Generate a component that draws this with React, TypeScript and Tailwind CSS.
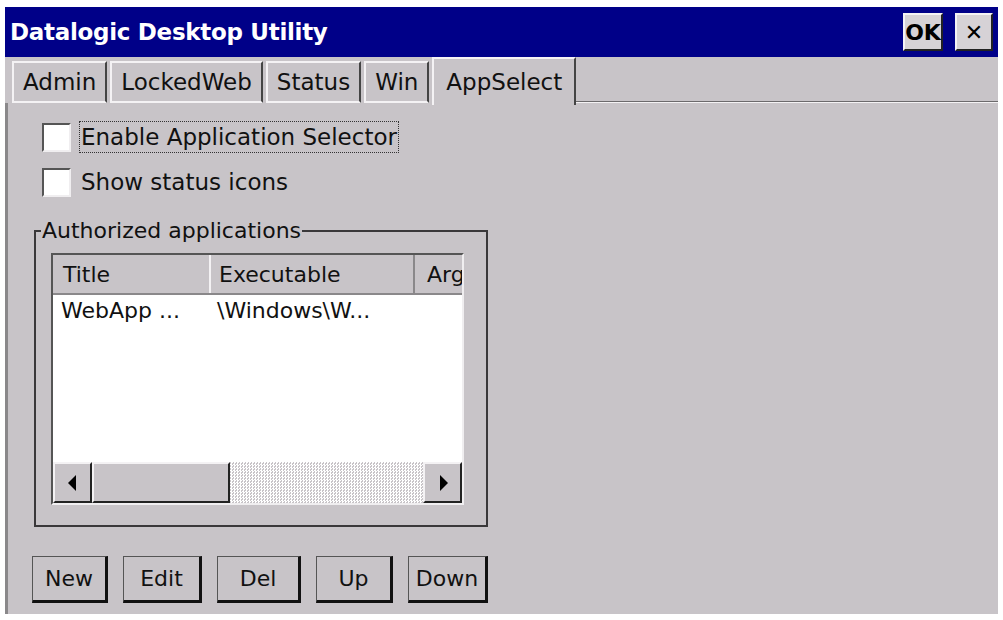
import React from 'react';

// CE-style 3D helpers
const raised = 'border-t-2 border-l-2 border-t-[#f4f2f4] border-l-[#f4f2f4] border-b-2 border-r-2 border-b-[#222] border-r-[#222]';
const sunken = 'border-t-2 border-l-2 border-t-[#555] border-l-[#555] border-b-2 border-r-2 border-b-[#f0eef0] border-r-[#f0eef0]';

const tabs = ['Admin', 'LockedWeb', 'Status', 'Win', 'AppSelect'];
const active = 'AppSelect';

function Checkbox({ label, focused }: { label: string; focused?: boolean }) {
  return (
    <div className="flex items-center h-[30px]">
      <div className={`w-[29px] h-[29px] bg-white ${sunken}`} />
      <span
        className={`ml-[9px] px-[1px] leading-[30px] ${focused ? 'outline outline-1 outline-dotted outline-[#333]' : ''}`}
      >
        {label}
      </span>
    </div>
  );
}

function Arrow({ dir }: { dir: 'left' | 'right' }) {
  return (
    <div className={`w-[39px] h-full bg-[#c8c4c8] ${raised} flex items-center justify-center`}>
      <svg width="10" height="16" viewBox="0 0 10 16">
        {dir === 'left' ? <path d="M8 0 L8 16 L0 8 Z" fill="#000" /> : <path d="M2 0 L2 16 L10 8 Z" fill="#000" />}
      </svg>
    </div>
  );
}

export default function App() {
  return (
    <div
      className="w-[1003px] h-[620px] bg-white pt-[7px] pl-[5px] overflow-hidden text-[#111]"
      style={{ fontFamily: '"DejaVu Sans", Verdana, sans-serif' }}
    >
      <div className="w-[993px] h-[607px] bg-[#c8c4c8] flex flex-col">
        {/* title bar */}
        <div className="h-[50px] bg-[#000088] flex items-center pl-[5px] pr-[5px]">
          <span className="text-white font-bold text-[23px] tracking-[-0.3px]">Datalogic Desktop Utility</span>
          <div className="ml-auto flex items-center gap-[12px]">
            <div className={`w-[40px] h-[38px] bg-[#d6d2d6] flex items-center justify-center font-bold text-[22px] text-black ${raised}`}>
              OK
            </div>
            <div className={`w-[38px] h-[38px] bg-[#d6d2d6] flex items-center justify-center text-[22px] text-black ${raised}`}>
              ✕
            </div>
          </div>
        </div>

        {/* tab strip */}
        <div className="h-[46px] flex items-end pl-[7px] text-[23px]">
          {tabs.map((t) =>
            t === active ? (
              <div
                key={t}
                className="h-[48px] -mb-[2px] px-[12px] flex items-start pt-[6px] bg-[#c8c4c8] border-t-2 border-l-2 border-[#f4f2f4] border-r-2 border-r-[#444] relative z-10"
              >
                {t}
              </div>
            ) : (
              <div
                key={t}
                className="h-[42px] mr-[3px] px-[9px] flex items-center bg-[#c8c4c8] border-t-2 border-l-2 border-[#f4f2f4] border-r-2 border-r-[#444] border-b-2 border-b-[#f4f2f4]"
              >
                {t}
              </div>
            )
          )}
          <div className="flex-1 h-[2px] bg-[#6c6a6c] border-b border-[#f4f2f4]" />
        </div>

        {/* page */}
        <div className="flex-1 flex flex-col border-l-[3px] border-[#8a888a] pl-[34px] pt-[19px] text-[23px]">
          <Checkbox label="Enable Application Selector" focused />
          <div className="h-[15px]" />
          <Checkbox label="Show status icons" />

          <fieldset className="mt-[20px] -ml-[8px] w-[454px] h-[310px] border-2 border-[#3a383a] px-0 pb-[21px]">
            <legend className="ml-[5px] px-[1px] leading-[28px] text-[22px]">Authorized applications</legend>
            <div className={`mt-[8px] ml-[15px] w-[413px] h-[252px] bg-white flex flex-col ${sunken}`}>
              {/* header */}
              <div className="h-[40px] flex bg-[#c8c4c8] border-b-2 border-[#8a888a] text-[22px] overflow-hidden">
                <div className="w-[158px] pl-[10px] flex items-center border-r-2 border-[#f4f2f4]">Title</div>
                <div className="w-[204px] pl-[8px] flex items-center border-r-2 border-[#8a888a]">Executable</div>
                <div className="flex-1 pl-[12px] flex items-center overflow-hidden whitespace-nowrap">Arg</div>
              </div>
              {/* rows */}
              <div className="flex-1 text-[22px]">
                <div className="flex h-[30px] items-center">
                  <div className="w-[158px] pl-[8px]">WebApp ...</div>
                  <div className="pl-[6px]">\Windows\W...</div>
                </div>
              </div>
              {/* horizontal scrollbar */}
              <div className="h-[41px] flex">
                <Arrow dir="left" />
                <div className={`w-[138px] h-full bg-[#c8c4c8] ${raised}`} />
                <div className="flex-1 bg-[image:repeating-conic-gradient(#ffffff_0_25%,#c8c4c8_0_50%)] bg-[length:3px_3px]" />
                <Arrow dir="right" />
              </div>
            </div>
          </fieldset>

          {/* action buttons */}
          <div className="mt-[29px] -ml-[10px] flex gap-[15px] text-[22px]">
            {[
              ['New', 'w-[76px]'],
              ['Edit', 'w-[79px]'],
              ['Del', 'w-[84px]'],
              ['Up', 'w-[77px]'],
              ['Down', 'w-[80px]'],
            ].map(([label, w]) => (
              <div
                key={label}
                className={`${w} h-[47px] flex items-center justify-center bg-[#c8c4c8] border border-[#555] border-b-[3px] border-r-[3px] border-b-[#111] border-r-[#111]`}
              >
                {label}
              </div>
            ))}
          </div>
        </div>
      </div>
    </div>
  );
}
